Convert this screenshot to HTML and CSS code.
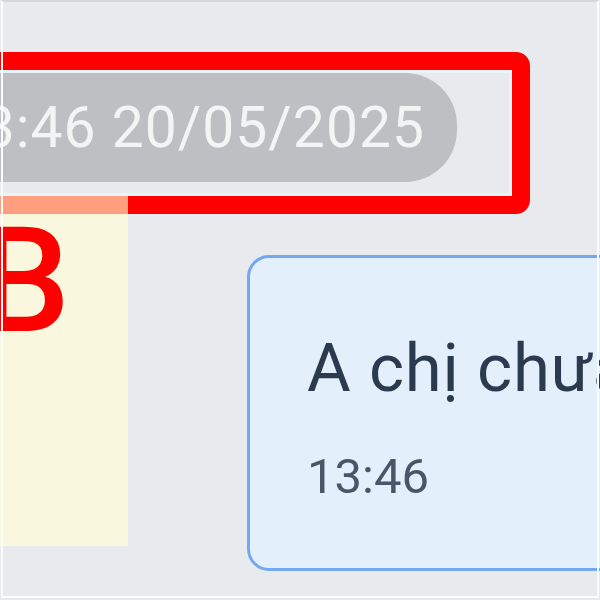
FILE: index.html
```html
<!DOCTYPE html>
<html lang="vi">
<head>
    <meta charset="UTF-8">
    <meta name="viewport" content="width=device-width, initial-scale=1.0">
    <title>Chat</title>
    <link rel="stylesheet" href="styles.css">
</head>
<body>
    <div class="screen">
        <div class="mark">
            <div class="mark-inner">
                <div class="date-pill">13:46 20/05/2025</div>
            </div>
        </div>
        <div class="row">
            <div class="side-col">
                <div class="side-label">B</div>
            </div>
            <div class="bubble">
                <div class="bubble-text">A chị chưa nhận được</div>
                <div class="bubble-time">13:46</div>
            </div>
        </div>
    </div>
</body>
</html>
```

FILE: styles.css
```css
* {
    margin: 0;
    padding: 0;
    box-sizing: border-box;
    font-family: 'Roboto', 'Liberation Sans', sans-serif;
}

body {
    background: #e9eaed;
    overflow: hidden;
}

.screen {
    width: 600px;
    height: 600px;
    overflow: hidden;
    padding-top: 52px;
}

/* frame lines drawn over the content */
.screen::after {
    content: "";
    position: fixed;
    left: 1px;
    top: 0;
    width: 594px;
    height: 594px;
    border-top: 2px solid #d6d7dc;
    border-left: 2px solid #fbfcfd;
    border-right: 2px solid #fbfcfd;
    border-bottom: 2px solid #fbfcfd;
    pointer-events: none;
}

.mark {
    margin-left: -80px;
    width: 610px;
    border: 18px solid #ff0000;
    border-radius: 14px;
}

.mark-inner {
    border: 3px solid #eaf3f8;
    padding: 0 52px 11px 0;
}

.date-pill {
    height: 109px;
    border-radius: 0 52px 52px 0;
    background: #bebfc3;
    color: #f4f4f4;
    font-size: 57px;
    letter-spacing: 1px;
    line-height: 109px;
    text-align: right;
    padding-right: 32px;
    white-space: nowrap;
}

.row {
    display: flex;
    align-items: flex-start;
    margin-top: -18px;
}

.side-col {
    flex: none;
    width: 200px;
    height: 350px;
    margin-left: -72px;
    border-top: 18px solid #ff9f80;
    background: #f9f8de;
    overflow: hidden;
}

.side-label {
    color: #ff0000;
    font-size: 146px;
    font-weight: 500;
    line-height: 1;
    padding-left: 50px;
    margin-top: -5px;
}

.bubble {
    flex: none;
    width: 520px;
    margin-top: 59px;
    margin-left: 119px;
    background: #e4effc;
    border: 3px solid #74a9f2;
    border-radius: 22px;
    padding: 70px 0 62px 57px;
}

.bubble-text {
    color: #2c3a4f;
    font-size: 67px;
    letter-spacing: 0.8px;
    line-height: 80px;
    white-space: nowrap;
}

.bubble-time {
    margin-top: 39px;
    color: #4b5568;
    font-size: 49px;
    line-height: 59px;
}
```
